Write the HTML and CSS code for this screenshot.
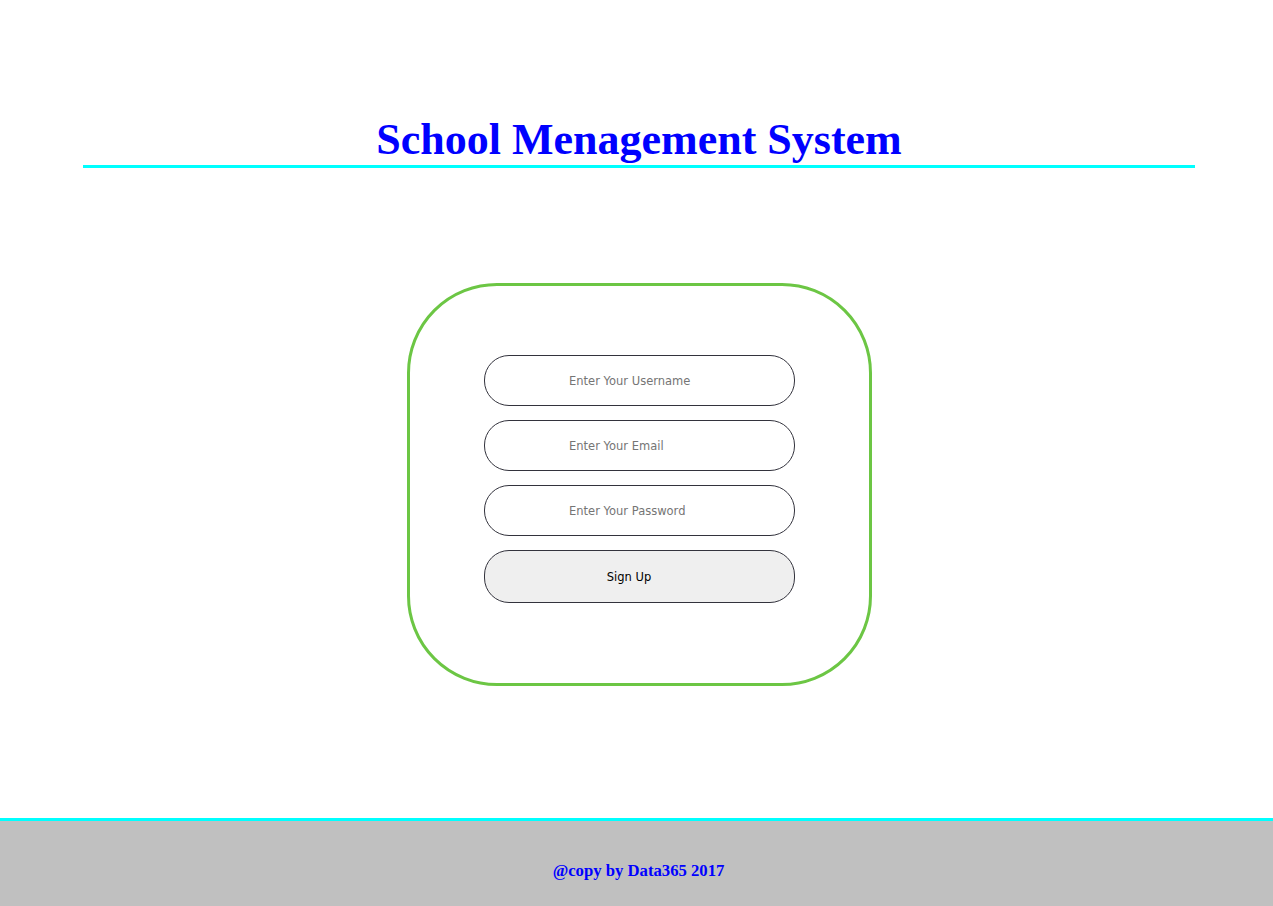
FILE: index.html
```html
<!DOCTYPE html>
<html lang="en">
<head>
<meta charset="utf-8">
<title>School Menagement System</title>
<link rel="stylesheet" href="styles.css">
</head>
<body>
<div class="page">
  <header class="header">
    <h1 class="title">School Menagement System</h1>
  </header>
  <main class="main">
    <form class="card">
      <input class="field" type="text" placeholder="Enter Your Username">
      <input class="field" type="email" placeholder="Enter Your Email">
      <input class="field" type="password" placeholder="Enter Your Password">
      <button class="btn" type="button">Sign Up</button>
    </form>
  </main>
  <footer class="footer">
    <p class="copy">@copy by Data365 2017</p>
  </footer>
</div>
</body>
</html>
```
FILE: styles.css
```css
html, body {
  margin: 0;
  padding: 0;
  background: #ffffff;
}
.page {
  height: 906px;
  display: flex;
  flex-direction: column;
  overflow: hidden;
}
.header {
  width: 1112px;
  margin-left: 83px;
  padding-top: 115px;
  padding-bottom: 0;
  border-bottom: 3px solid #00ffff;
}
.title {
  margin: 0;
  font-family: "Liberation Serif", "Times New Roman", serif;
  font-weight: bold;
  font-size: 44px;
  line-height: 50px;
  color: #0000ff;
  text-align: center;
}
.main {
  width: 1112px;
  margin-left: 83px;
  display: flex;
  justify-content: center;
  align-items: flex-start;
  padding-top: 115px;
}
.card {
  box-sizing: border-box;
  width: 465px;
  margin: 0 0 0 1px;
  border: 3px solid #6cc644;
  border-radius: 90px;
  padding: 69px 0 80px 0;
  display: flex;
  flex-direction: column;
  align-items: center;
  gap: 14px;
}
.field, .btn {
  box-sizing: border-box;
  width: 311px;
  border: 1px solid #33333d;
  border-radius: 25px;
  font-family: "DejaVu Sans", Tahoma, sans-serif;
  font-size: 11.5px;
  margin: 0;
  outline: none;
}
.field {
  height: 51px;
  padding: 0 10px 0 84px;
  background: #ffffff;
  color: #222;
}
.field::placeholder {
  color: #757575;
}
.btn {
  height: 53px;
  background: #efefef;
  color: #000000;
  text-align: center;
  padding: 0 21px 0 0;
}
.footer {
  margin-top: auto;
  border-top: 3px solid #00ffff;
  background: #c0c0c0;
  height: 85px;
  box-sizing: content-box;
}
.copy {
  margin: 0;
  padding-top: 40px;
  font-family: "Liberation Serif", "Times New Roman", serif;
  font-weight: bold;
  font-size: 16.7px;
  line-height: 20px;
  color: #0000ff;
  text-align: center;
  padding-left: 4px;
}
```
